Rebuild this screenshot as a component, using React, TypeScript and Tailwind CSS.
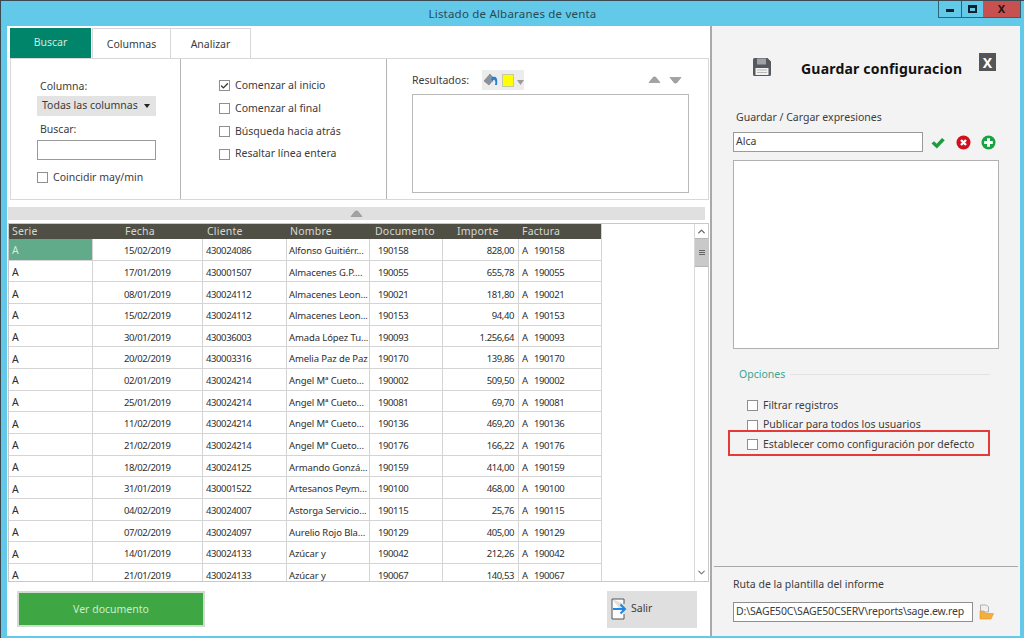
import React from 'react';
import { Check, ChevronUp, ChevronDown } from 'lucide-react';

const rows = [
  ['15/02/2019', '430024086', 'Alfonso Guitiérr...', '190158', '828,00'],
  ['17/01/2019', '430001507', 'Almacenes G.P....', '190055', '655,78'],
  ['08/01/2019', '430024112', 'Almacenes Leon...', '190021', '181,80'],
  ['15/02/2019', '430024112', 'Almacenes Leon...', '190153', '94,40'],
  ['30/01/2019', '430036003', 'Amada López Tu...', '190093', '1.256,64'],
  ['20/02/2019', '430003316', 'Amelia Paz de Paz', '190170', '139,86'],
  ['02/01/2019', '430024214', 'Angel Mª Cueto...', '190002', '509,50'],
  ['25/01/2019', '430024214', 'Angel Mª Cueto...', '190081', '69,70'],
  ['11/02/2019', '430024214', 'Angel Mª Cueto...', '190136', '469,20'],
  ['21/02/2019', '430024214', 'Angel Mª Cueto...', '190176', '166,22'],
  ['18/02/2019', '430024125', 'Armando Gonzá...', '190159', '414,00'],
  ['31/01/2019', '430001522', 'Artesanos Peym...', '190100', '468,00'],
  ['04/02/2019', '430024007', 'Astorga Servicio...', '190115', '25,76'],
  ['07/02/2019', '430024097', 'Aurelio Rojo Bla...', '190129', '405,00'],
  ['14/01/2019', '430024133', 'Azúcar y', '190042', '212,26'],
  ['21/01/2019', '430024133', 'Azúcar y', '190067', '140,53'],
];

function CheckBox({ checked }: { checked?: boolean }) {
  return (
    <span className="w-[11px] h-[11px] border border-[#8f8f8f] bg-white flex items-center justify-center shrink-0">
      {checked && <Check size={10} strokeWidth={3.5} className="text-[#333]" />}
    </span>
  );
}

function Option({ label, className }: { label: string; className?: string }) {
  return (
    <div className={`flex items-center gap-[5px] ${className ?? ''}`}>
      <CheckBox />
      <span>{label}</span>
    </div>
  );
}

function Triangle({ down, className }: { down?: boolean; className?: string }) {
  return (
    <svg width="13" height="8" viewBox="0 0 13 8" className={className}>
      <path d={down ? 'M1 1.5h11L7.5 7h-2z' : 'M5.5 1h2L12 6.5H1z'} fill="#a3a3a3" stroke="#8a8a8a" strokeWidth="0.6" />
    </svg>
  );
}

function Grid() {
  const cell = 'h-full border-r border-[#d4d4d4] flex items-center shrink-0 pt-[4px]';
  const digits = 'tracking-[-0.4px]';
  return (
    <div className="h-[359px] mt-[3px] mx-px border border-[#c8c8c8] flex overflow-hidden">
      <div className="w-[593px] text-[9.5px] text-[#2e2e2e] tracking-[-0.1px] border-r border-[#d4d4d4]">
        <div className="h-[15px] bg-[#4f4f45] flex items-center text-[10.5px] text-[#d8d8d0] tracking-[0.2px]">
          <span className="w-[84px] pl-[3px]">Serie</span>
          <span className="w-[110px] pl-[32px]">Fecha</span>
          <span className="w-[84px] pl-[4px]">Cliente</span>
          <span className="w-[83px] pl-[3px]">Nombre</span>
          <span className="w-[73px] pl-[5px]">Documento</span>
          <span className="w-[76px] pl-[14px]">Importe</span>
          <span className="pl-[3px]">Factura</span>
        </div>
        {rows.map((r, i) => (
          <div key={i} className="h-[21.67px] border-b border-[#d4d4d4] flex items-center">
            <span className={`${cell} w-[84px] pl-[3px] text-[10.5px] ${i === 0 ? 'bg-[#62ab8a] text-[#d5eadf]' : ''}`}>A</span>
            <span className={`${cell} ${digits} w-[110px] pl-[31px]`}>{r[0]}</span>
            <span className={`${cell} ${digits} w-[84px] pl-[3px]`}>{r[1]}</span>
            <span className={`${cell} w-[83px] pl-[2px] whitespace-nowrap`}>{r[2]}</span>
            <span className={`${cell} ${digits} w-[73px] pl-[8px]`}>{r[3]}</span>
            <span className={`${cell} ${digits} w-[76px] justify-end pr-[4px]`}>{r[4]}</span>
            <span className="pl-[3px] w-[14px] pt-[4px]">A</span>
            <span className={`${digits} pl-[1px] pt-[4px]`}>{r[3]}</span>
          </div>
        ))}
      </div>
      <div className="flex-1 flex justify-end bg-white">
        <div className="w-[14px] border-l border-[#d8d8d8] flex flex-col items-center">
          <div className="w-full h-[14px] flex items-center justify-center shrink-0">
            <ChevronUp size={11} strokeWidth={3} className="text-[#666]" />
          </div>
          <div className="w-full h-[29px] bg-[#c9c9c9] border-y border-[#b5b5b5] flex flex-col items-center justify-center gap-px shrink-0">
            <span className="w-[6px] h-px bg-[#666]" />
            <span className="w-[6px] h-px bg-[#666]" />
            <span className="w-[6px] h-px bg-[#666]" />
          </div>
          <ChevronDown size={11} strokeWidth={2.5} className="text-[#777] mt-auto mb-[3px] shrink-0" />
        </div>
      </div>
    </div>
  );
}

function SearchPanel() {
  return (
    <div className="ml-[3px] mr-[1px] h-[142px] border border-[#d8d8d8] flex text-[10.5px] text-[#3c3c3c]">
      <div className="w-[170px] border-r border-[#b5b5b5] pl-[26px] pt-[20px] shrink-0">
        <div className="pl-[3px]">Columna:</div>
        <div className="mt-[1px] w-[119px] h-[20px] bg-[#e3e3e3] flex items-center justify-between pl-[5px] pr-[4px]">
          <span>Todas las columnas</span>
          <span className="w-0 h-0 border-x-[3px] border-x-transparent border-t-[4px] border-t-[#222] mr-[2px]" />
        </div>
        <div className="mt-[6px] pl-[3px]">Buscar:</div>
        <div className="mt-[2px] w-[119px] h-[20px] bg-white border border-[#9a9a9a]" />
        <div className="mt-[10px] flex items-center gap-[5px]">
          <CheckBox />
          <span>Coincidir may/min</span>
        </div>
      </div>
      <div className="w-[206px] border-r border-[#b5b5b5] pl-[38px] pt-[19px] flex flex-col gap-[7px] shrink-0">
        <div className="flex items-center gap-[5px]"><CheckBox checked /><span>Comenzar al inicio</span></div>
        <Option label="Comenzar al final" />
        <Option label="Búsqueda hacia atrás" />
        <Option label="Resaltar línea entera" />
      </div>
      <div className="flex-1 pl-[25px] pr-[15px] pt-[9px] flex flex-col">
        <div className="h-[24px] flex items-center mr-[4px]">
          <span className="mt-[2px]">Resultados:</span>
          <div className="ml-[13px] w-[42px] h-[20px] bg-[#ececec] flex items-center pl-[1px]">
            <svg width="16" height="16" viewBox="0 0 16 16" className="shrink-0">
              <path d="M1 9l6-7 4 5-5 6z" fill="#8b929c" stroke="#666c75" strokeWidth="0.5" />
              <path d="M10 5c3-1 5 1 4 8h-2c1-3 0-6-2-5v2L8 7l2-3z" fill="#2d7fc4" />
            </svg>
            <span className="ml-[3px] w-[12px] h-[13px] bg-[#ffff00] border border-[#c9c9a0] shrink-0" />
            <svg width="7" height="5" viewBox="0 0 7 5" className="ml-[3px] mt-[5px] shrink-0">
              <path d="M0 0h7L3.5 5z" fill="#9a9a9a" />
            </svg>
          </div>
          <div className="ml-auto mr-[7px] flex items-center gap-[8px]">
            <Triangle />
            <Triangle down />
          </div>
        </div>
        <div className="mt-[2px] mr-[4px] h-[99px] bg-white border border-[#b9b9b9]" />
      </div>
    </div>
  );
}

function SavePanel() {
  return (
    <div className="flex-1 bg-[#f3f3f3] border-l-2 border-[#a9a9a9] text-[10.5px] text-[#3c3c3c] flex flex-col relative min-w-0">
      <div className="h-[48px] mt-[26px] flex items-start pl-[40px] relative">
        <svg width="20" height="20" viewBox="0 0 20 20" className="mt-[5px] shrink-0">
          <path d="M1 2.5A1.5 1.5 0 0 1 2.5 1h13L19 4.5v13a1.5 1.5 0 0 1-1.5 1.5h-15A1.5 1.5 0 0 1 1 17.5z" fill="#55585e" />
          <rect x="5" y="1.5" width="9" height="6" fill="#9ea1a6" />
          <rect x="3.5" y="11" width="13" height="7" fill="#f2f2f2" />
          <path d="M5 13h10M5 15.5h10" stroke="#a8a8a8" strokeWidth="0.8" />
        </svg>
        <span className="ml-[29px] mt-[6px] text-[14px] font-bold text-[#111] tracking-[0.2px] whitespace-nowrap">Guardar configuracion</span>
        <span className="ml-auto mr-[24px] w-[17px] h-[18px] mt-px bg-[#555] text-white font-bold text-[14px] flex items-center justify-center">X</span>
      </div>
      <div className="pl-[24px] mt-[10px]">Guardar / Cargar expresiones</div>
      <div className="pl-[21px] mt-[6px] flex items-center">
        <div className="w-[190px] h-[20px] bg-white border border-[#9a9a9a] pl-[2px] flex items-center">Alca</div>
        <svg width="14" height="12" viewBox="0 0 14 12" className="ml-[8px] mt-[2px]">
          <path d="M0.5 6.5l2.5-2.2 2.7 2.5L11 1l2.8 2.3L5.9 11.5z" fill="#1f9b3f" />
        </svg>
        <svg width="15" height="15" viewBox="0 0 15 15" className="ml-[11px] mt-[1px]">
          <circle cx="7.5" cy="7.5" r="7" fill="#d0101c" />
          <path d="M5 5l5 5M10 5l-5 5" stroke="#fff" strokeWidth="2.4" />
        </svg>
        <svg width="15" height="15" viewBox="0 0 15 15" className="ml-[10px] mt-[1px]">
          <circle cx="7.5" cy="7.5" r="7" fill="#17a33f" />
          <path d="M7.5 3.2v8.6M3.2 7.5h8.6" stroke="#fff" strokeWidth="3" />
        </svg>
      </div>
      <div className="ml-[21px] mt-[8px] w-[266px] h-[189px] bg-white border border-[#b0b0b0] shrink-0" />
      <div className="ml-[27px] mr-[30px] mt-[18px] flex items-center gap-[5px] text-[#3ea58e]">
        <span>Opciones</span>
        <span className="flex-1 h-px bg-[#e2e2e2]" />
      </div>
      <div className="pl-[35px] mt-[15px] flex flex-col gap-[4px]">
        <Option label="Filtrar registros" className="gap-[4px]" />
        <Option label="Publicar para todos los usuarios" className="gap-[4px]" />
        <Option label="Establecer como configuración por defecto" className="gap-[4px]" />
      </div>
      <div className="absolute left-[16px] top-[404px] w-[262px] h-[26px] border-2 border-[#e53a3a]" />
      <div className="mt-auto mx-[2px] mb-[14px] border-t border-[#a8a8a8] pl-[19px] pt-[10px]">
        <div>Ruta de la plantilla del informe</div>
        <div className="mt-[9px] flex items-center">
          <div className="w-[240px] h-[20px] bg-white border border-[#8f8f8f] pl-[2px] flex items-center whitespace-nowrap overflow-hidden tracking-[-0.15px]">D:\SAGE50C\SAGE50CSERV\reports\sage.ew.rep</div>
          <svg width="15" height="16" viewBox="0 0 15 16" className="ml-[6px]">
            <path d="M1.5 1h6l2 2v5h-8z" fill="#eef0f2" stroke="#9aa0a6" strokeWidth="0.8" />
            <path d="M1 7v8h11l2.5-5.5H6L5 7z" fill="#f5ad3c" stroke="#e09425" strokeWidth="0.6" />
          </svg>
        </div>
      </div>
    </div>
  );
}

export default function App() {
  return (
    <div className="w-[1024px] h-[638px] bg-[#62c9e9] border-t border-l border-[#3b4a52] flex flex-col overflow-hidden font-['Noto_Sans','Open_Sans',sans-serif]">
      <div className="h-[25px] flex relative shrink-0">
        <div className="flex-1 text-center text-[11.5px] text-[#2b4a55] pt-[4px] tracking-[0.2px]">Listado de Albaranes de venta</div>
        <div className="absolute right-[3px] top-0 h-[17px] flex border-b border-x border-[#2f6378]">
          <div className="w-[23px] border-r border-[#2f6378] flex items-center justify-center">
            <span className="w-[8px] h-[3px] mt-[3px] bg-[#10212b]" />
          </div>
          <div className="w-[21px] flex items-center justify-center">
            <span className="w-[9px] h-[8px] border-2 border-t-[3px] border-[#10212b]" />
          </div>
          <div className="w-[37px] bg-[#c75050] flex items-center justify-center font-bold text-[11px] text-[#2a1512]">X</div>
        </div>
      </div>
      <div className="flex-1 ml-[6px] mr-[4px] mb-[2px] flex min-h-0">
        <div className="w-[703px] bg-white flex flex-col shrink-0 pt-[2px]">
          <div className="h-[30px] ml-[3px] flex text-[10.5px] text-[#3c3c3c]">
            <div className="w-[81px] bg-[#00856a] text-[#cfe9df] flex items-center justify-center">Buscar</div>
            <div className="w-[79px] pt-[2px] border border-b-0 border-[#d8d8d8] ml-px flex items-center justify-center">Columnas</div>
            <div className="w-[80px] pt-[2px] border border-b-0 border-l-0 border-[#d8d8d8] flex items-center justify-center">Analizar</div>
          </div>
          <SearchPanel />
          <div className="h-[13px] mt-[7px] ml-px mr-[5px] bg-[#e0e0e0] flex items-center justify-center shrink-0">
            <Triangle />
          </div>
          <Grid />
          <div className="flex-1 flex items-center justify-between pl-[10px] pr-[13px]">
            <div className="w-[188px] h-[36px] pt-[2px] bg-[#3ea743] border-2 border-[#d0dcd0] text-[#cdeccd] text-[10.5px] flex items-center justify-center">Ver documento</div>
            <div className="w-[90px] h-[37px] bg-[#dfdfdf] flex items-center pl-[4px] text-[10.5px] text-[#3c3c3c]">
              <svg width="17" height="22" viewBox="0 0 17 22">
                <path d="M1 1h12v5M13 16v5H1V1" fill="#fbfbfb" stroke="#555" strokeWidth="1" />
                <path d="M2 11h12M9.5 6.5l4.5 4.5-4.5 4.5" fill="none" stroke="#1f86e6" strokeWidth="2" />
              </svg>
              <span className="ml-[3px]">Salir</span>
            </div>
          </div>
        </div>
        <SavePanel />
      </div>
    </div>
  );
}
